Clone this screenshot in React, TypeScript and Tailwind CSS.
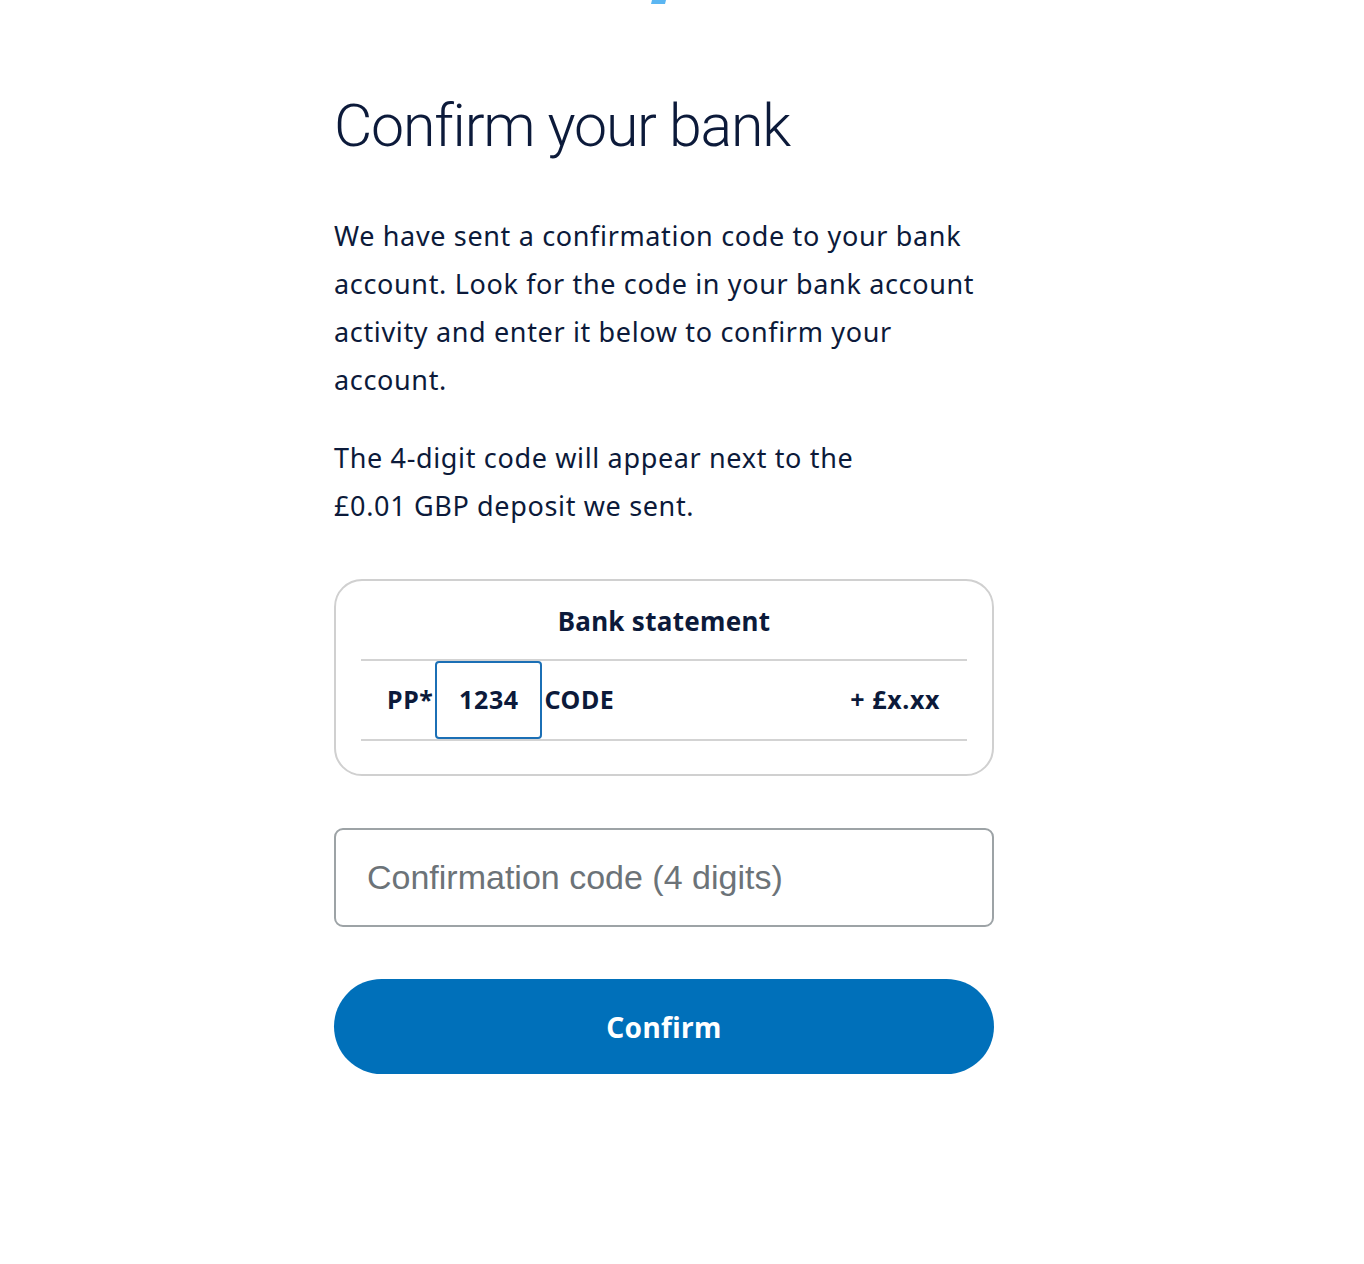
const body = "font-['Noto_Sans',sans-serif]";

export default function App() {
  return (
    <main className="min-h-[1264px] bg-white text-[#0c1a3a]">
      <div className="ml-[650px] flex">
        <svg width="16" height="5" viewBox="0 0 16 5">
          <path d="M2 0 H16 L15 4 H1 Z" fill="#5bb6f2" />
        </svg>
      </div>

      <section className="ml-[334px] w-[660px] pt-[85px]">
        <h1 className="font-['Roboto',sans-serif] text-[59px] font-light leading-[72px] tracking-[-1.2px] text-[#0c1a3a]">
          Confirm your bank
        </h1>

        <div className={`${body} mt-[50px] text-[27px] leading-[48px] tracking-[0.65px]`}>
          <p>
            We have sent a confirmation code to your bank account. Look for the code in your bank
            account activity and enter it below to confirm your account.
          </p>
          <p className="mt-[30px] pr-[100px]">The 4-digit code will appear next to the £0.01 GBP deposit we sent.</p>
        </div>

        <div className={`${body} mt-[49px] rounded-[28px] border-2 border-[#d0d0d0] px-[25px] pb-[33px] pt-[20px]`}>
          <h2 className="text-center text-[26px] font-bold leading-[40px] tracking-[0.3px]">Bank statement</h2>
          <div className="mt-[18px] flex h-[82px] items-center border-y-2 border-[#d3d3d3] pl-[26px] pr-[27px] text-[25px] font-bold tracking-[0.6px]">
            <span>PP*</span>
            <span className="mx-[2px] flex h-[78px] w-[107px] items-center justify-center rounded-[4px] border-2 border-[#1b6fb5]">
              1234
            </span>
            <span>CODE</span>
            <span className="ml-auto">+ £x.xx</span>
          </div>
        </div>

        <input
          placeholder="Confirmation code (4 digits)"
          className="mt-[52px] block h-[99px] w-full rounded-[9px] border-2 border-[#9da3a6] px-[31px] font-['Liberation_Sans',sans-serif] text-[34px] text-[#0c1a3a] outline-none placeholder:text-[#6c7378]"
        />

        <button className={`${body} mt-[52px] flex h-[95px] w-full items-center justify-center rounded-full bg-[#0070ba] text-[28px] font-bold tracking-[0.4px] text-white`}>
          Confirm
        </button>
      </section>
    </main>
  );
}
